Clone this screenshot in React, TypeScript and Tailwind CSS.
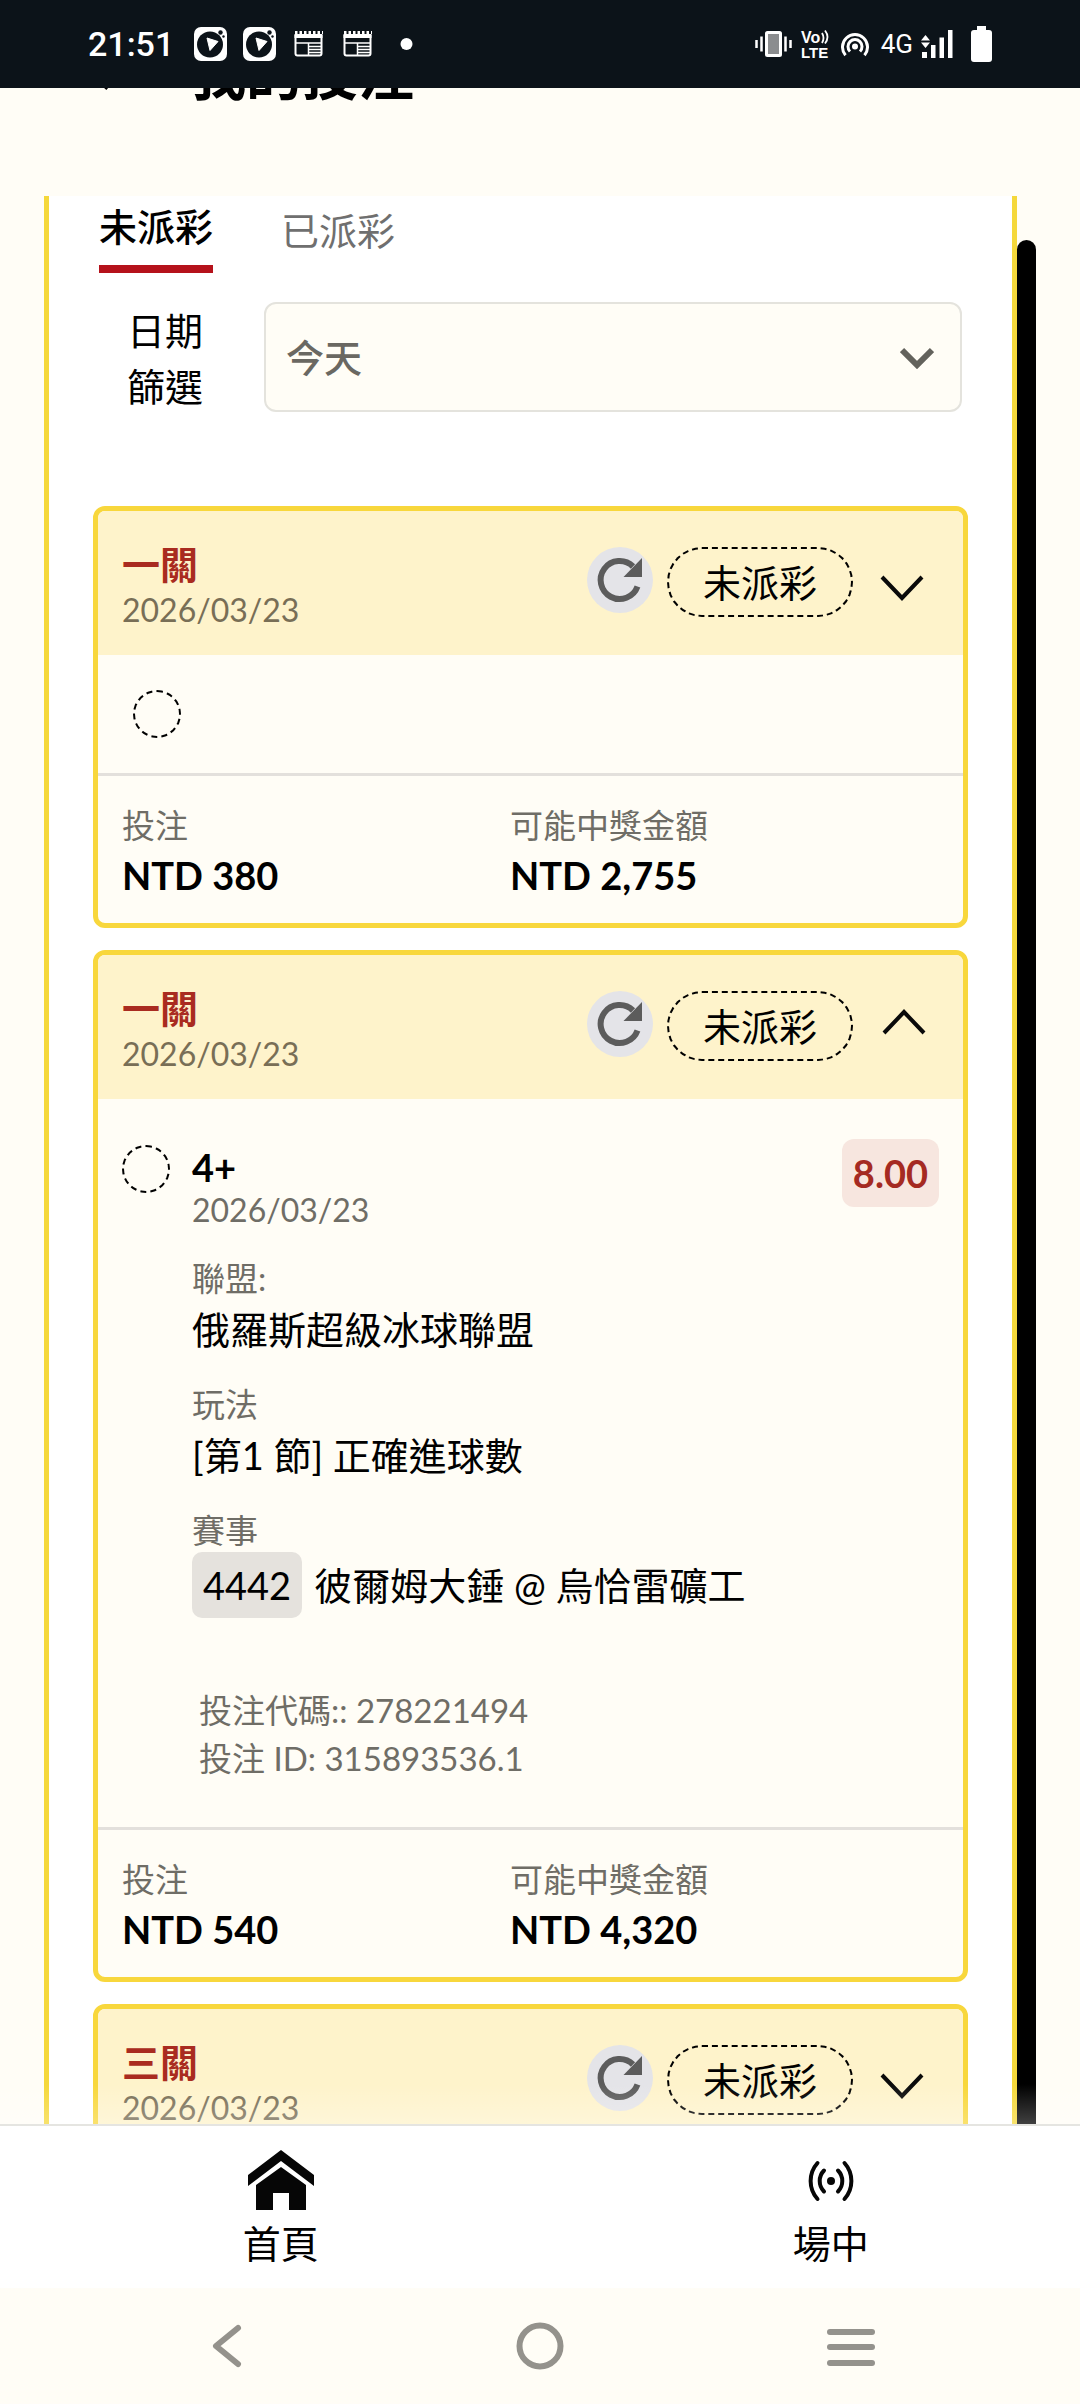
import React, { useState } from 'react';

interface BetDetail {
  selection: string;
  date: string;
  odds: string;
  league: string;
  market: string;
  eventNo: string;
  event: string;
  betCode: string;
  betId: string;
}

interface Bet {
  id: number;
  title: string;
  date: string;
  stake: string;
  payout: string;
  open: boolean;
  detail?: BetDetail;
}

const bets: Bet[] = [
  { id: 1, title: '一關', date: '2026/03/23', stake: 'NTD 380', payout: 'NTD 2,755', open: false },
  {
    id: 2,
    title: '一關',
    date: '2026/03/23',
    stake: 'NTD 540',
    payout: 'NTD 4,320',
    open: true,
    detail: {
      selection: '4+',
      date: '2026/03/23',
      odds: '8.00',
      league: '俄羅斯超級冰球聯盟',
      market: '[第1 節] 正確進球數',
      eventNo: '4442',
      event: '彼爾姆大錘 @ 烏恰雷礦工',
      betCode: '278221494',
      betId: '315893536.1',
    },
  },
  { id: 3, title: '三關', date: '2026/03/23', stake: '', payout: '', open: false },
];

const PlayAppIcon = () => (
  <svg width="33" height="34" viewBox="0 0 33 34" aria-hidden="true">
    <rect width="33" height="34" rx="7" fill="#fff" />
    <circle cx="16" cy="17.500" r="13" fill="#0c1319" />
    <path d="M13 11l11 3.500-8 9z" fill="#fff" stroke="#fff" strokeLinejoin="round" />
    <circle cx="26.500" cy="5.500" r="2.200" fill="#0c1319" />
    <circle cx="29.500" cy="9.500" r="1.200" fill="#0c1319" />
  </svg>
);

const NewsIcon = () => (
  <svg width="33" height="26" viewBox="0 0 33 26" fill="none" stroke="#fff" aria-hidden="true">
    <path d="M3.500 4v18.500a2 2 0 002 2h22a2 2 0 002-2V4" strokeWidth="2" />
    <path d="M2.500 5h28" strokeWidth="4" />
    <path d="M3 1.500h28" strokeWidth="3" strokeDasharray="2.500 2" />
    <path d="M3 12h27M16.500 12v12M17 15.500h12M17 18.500h12M17 21.500h12" strokeWidth="1.500" />
  </svg>
);

const StatusBar = () => (
  <div className="flex h-[88px] shrink-0 items-center justify-between bg-[#0c1319] px-[88px] font-['Roboto',sans-serif] text-white">
    <div className="flex items-center gap-4">
      <span className="mr-1 text-[34px] leading-10 font-medium">21:51</span>
      <PlayAppIcon />
      <PlayAppIcon />
      <NewsIcon />
      <NewsIcon />
      <svg width="33" height="12" viewBox="0 0 33 12" aria-hidden="true">
        <circle cx="16.500" cy="6" r="6" fill="#fff" />
      </svg>
    </div>
    <div className="flex items-center">
      {/* バイブ */}
      <svg className="mr-2" width="38" height="26" viewBox="0 0 38 26" fill="none" stroke="#fff" aria-hidden="true">
        <rect x="11.500" y="1.500" width="14" height="23" rx="1" strokeWidth="3" fill="#8b8d8f" />
        <path d="M1.500 9v8M35.500 9v8M6.500 5.500v15M30.500 5.500v15" strokeWidth="2.500" />
      </svg>
      <svg className="mr-3 overflow-visible" width="28" height="30" viewBox="0 0 28 30" aria-hidden="true">
        <text x="0" y="14" fontSize="16" fontWeight="700" fontFamily="Liberation Sans, sans-serif" fill="#fff">Vo</text>
        <text x="0" y="29" fontSize="15" fontWeight="700" fontFamily="Liberation Sans, sans-serif" fill="#fff">LTE</text>
        <path d="M21 4q3 5 0 10M24 1.500q5 6.500 0 13" fill="none" stroke="#fff" strokeWidth="1.800" />
      </svg>
      <svg className="mr-3" width="28" height="26" viewBox="0 0 28 26" fill="none" stroke="#fff" strokeWidth="3" aria-hidden="true">
        <path d="M4.500 24.200a12.500 12.500 0 1119 0" />
        <path d="M9 20.500a7 7 0 1110 0" />
        <circle cx="14" cy="15.500" r="3" fill="#fff" stroke="none" />
      </svg>
      <span className="mr-2 text-[26px] leading-10">4G</span>
      <svg className="mr-[18px]" width="32" height="28" viewBox="0 0 32 28" fill="#fff" aria-hidden="true">
        <path d="M1 22h5v6H1zM10 15h4.500v13H10zM18.500 7.500H23V28h-4.500zM27 0h4.500v28H27z" />
        <path d="M0 10.500L4.500 5 9 10.500zM0 12.500h9L4.500 18z" />
      </svg>
      <svg width="21" height="36" viewBox="0 0 21 36" fill="#fff" aria-hidden="true">
        <rect x="6" width="9" height="6" />
        <rect y="4" width="21" height="32" rx="3" />
      </svg>
    </div>
  </div>
);

const DashedCircle = () => (
  <span className="block size-12 shrink-0 rounded-full border-2 border-dashed border-black" />
);

const BetHeader: React.FC<{ bet: Bet; open: boolean; onToggle: () => void }> = ({ bet, open, onToggle }) => (
  <div className="flex h-36 items-start justify-between bg-[#fef3cb] pt-[29px] pr-[26px] pl-6">
    <div>
      <h2 className="text-[38px] leading-[48px] font-bold text-[#a92b20]">{bet.title}</h2>
      <p className="text-[32px] leading-[44px] text-[#786e56]">{bet.date}</p>
    </div>
    <div className="flex items-start gap-[14px] pt-[7px]">
      <button type="button" aria-label="重新整理" className="size-[66px] rounded-full bg-[#e4e4e8]">
        <svg width="66" height="66" viewBox="0 0 66 66" aria-hidden="true">
          <path d="M50.500 39.500A19 19 0 1146 19.500" fill="none" stroke="#5c5c5c" strokeWidth="6" />
          <path d="M55 11v19H36.500z" fill="#5c5c5c" />
        </svg>
      </button>
      <span className="flex h-[70px] w-[186px] items-center justify-center rounded-full border-2 border-dashed border-black text-[38px] leading-[48px]">
        未派彩
      </span>
      <button type="button" aria-expanded={open} aria-label="展開" className="h-[70px] w-[70px]" onClick={onToggle}>
        <svg width="70" height="70" viewBox="0 0 70 70" fill="none" stroke="#0a0a0a" strokeWidth="4" aria-hidden="true">
          <path d={open ? 'M17 42l20-21 20 21' : 'M15 30l20 21 20-21'} />
        </svg>
      </button>
    </div>
  </div>
);

const Field: React.FC<{ label: string; children: React.ReactNode }> = ({ label, children }) => (
  <div className="mt-7">
    <dt className="text-[33px] leading-[44px] text-[#6f6d66]">{label}</dt>
    <dd className="text-[38px]">{children}</dd>
  </div>
);

const BetDetailView: React.FC<{ detail: BetDetail }> = ({ detail }) => (
  <div className="flex items-start gap-[22px] px-6 pt-10 pb-[45px]">
    <div className="pt-[6px]">
      <DashedCircle />
    </div>
    <div className="min-w-0 flex-1">
      <div className="flex items-start justify-between">
        <div className="pt-1">
          <p className="text-[38px] leading-[48px] font-bold">{detail.selection}</p>
          <p className="text-[32px] leading-[37px] text-[#6f6d66]">{detail.date}</p>
        </div>
        <span className="rounded-xl bg-[#f7e6df] px-[11px] py-[10px] text-[38px] leading-[48px] font-bold text-[#a52a22]">
          {detail.odds}
        </span>
      </div>
      <dl>
        <Field label="聯盟:">
          <p className="pt-1 leading-[50px]">{detail.league}</p>
        </Field>
        <Field label="玩法">
          <p className="pt-1 leading-[50px]">{detail.market}</p>
        </Field>
        <Field label="賽事">
          <p className="flex items-center gap-3 leading-[50px]">
            <span className="rounded-[10px] bg-[#e5e2dd] px-[11px] py-2">{detail.eventNo}</span>
            <span>{detail.event}</span>
          </p>
        </Field>
      </dl>
      <div className="mt-[68px] pl-[7px] text-[33px] leading-[48px] text-[#6f6d66]">
        <p>投注代碼:: {detail.betCode}</p>
        <p>投注 ID: {detail.betId}</p>
      </div>
    </div>
  </div>
);

const BetCard: React.FC<{ bet: Bet }> = ({ bet }) => {
  const [open, setOpen] = useState(bet.open);

  return (
    <article className="shrink-0 overflow-hidden rounded-xl border-[5px] border-[#f8d73c] bg-[#fffdf6]">
      <BetHeader bet={bet} open={open} onToggle={() => setOpen(!open)} />
      {open && bet.detail ? (
        <BetDetailView detail={bet.detail} />
      ) : (
        <div className="px-[35px] py-[35px]">
          <DashedCircle />
        </div>
      )}
      {bet.stake && (
        <dl className="flex border-t-[3px] border-[#e3e0dc] px-6 pt-[27px] pb-6">
          <div className="w-[388px]">
            <dt className="text-[33px] leading-[44px] text-[#6f6d66]">投注</dt>
            <dd className="mt-1 text-[38px] leading-[48px] font-bold">{bet.stake}</dd>
          </div>
          <div>
            <dt className="text-[33px] leading-[44px] text-[#6f6d66]">可能中獎金額</dt>
            <dd className="mt-1 text-[38px] leading-[48px] font-bold">{bet.payout}</dd>
          </div>
        </dl>
      )}
    </article>
  );
};

const BottomNav = () => (
  <nav className="flex h-[164px] shrink-0 border-t-2 border-[#e5e5e1] bg-white text-[38px] leading-[48px]">
    <a href="#home" className="flex w-[52%] flex-col items-center pt-6">
      <svg width="66" height="60" viewBox="0 0 66 60" fill="#060606" aria-hidden="true">
        <path d="M33 0l33 25v11L33 11 0 36V25z" />
        <path d="M33 17l25 18v25H41V43H25v17H8V35z" />
      </svg>
      <span className="mt-[9px]">首頁</span>
    </a>
    <a href="#live" className="flex flex-1 flex-col items-center pt-6 pl-5">
      <svg width="66" height="60" viewBox="0 0 66 60" fill="none" stroke="#060606" strokeWidth="4" strokeLinecap="round" aria-hidden="true">
        <path d="M19.500 13a27 27 0 000 36M46.500 13a27 27 0 010 36M26 20.500a15 15 0 000 21M40 20.500a15 15 0 010 21" />
        <circle cx="33" cy="31" r="4" fill="#060606" stroke="none" />
      </svg>
      <span className="mt-[9px]">場中</span>
    </a>
  </nav>
);

const SystemNav = () => (
  <div className="flex h-[116px] shrink-0 items-center justify-between bg-[#fffdf6] px-[205px]">
    <button type="button" aria-label="返回">
      <svg width="48" height="48" viewBox="0 0 48 48" fill="none" stroke="#94928c" strokeWidth="6" strokeLinecap="round" strokeLinejoin="round" aria-hidden="true">
        <path d="M33 6L11 24l22 18" />
      </svg>
    </button>
    <button type="button" aria-label="主畫面">
      <svg width="48" height="48" viewBox="0 0 48 48" fill="none" stroke="#94928c" strokeWidth="6" aria-hidden="true">
        <circle cx="24" cy="24" r="20.500" />
      </svg>
    </button>
    <button type="button" aria-label="最近使用">
      <svg width="48" height="48" viewBox="0 0 48 48" fill="#94928c" aria-hidden="true">
        <rect y="7" width="48" height="6" rx="3" />
        <rect y="22" width="48" height="6" rx="3" />
        <rect y="38" width="48" height="6" rx="3" />
      </svg>
    </button>
  </div>
);

const App: React.FC = () => {
  const [range, setRange] = useState('today');

  return (
    <div lang="zh-Hant" className="flex h-screen flex-col overflow-hidden bg-[#fffdf6] font-['Lato','Noto_Sans_CJK_TC',sans-serif] text-black">
      <StatusBar />
      {/* ヘッダーはスクロールで上に隠れている */}
      <header className="flex h-[108px] shrink-0 items-end overflow-hidden pb-[86px] pl-[88px]">
        <svg className="mb-[17px] shrink-0" width="44" height="44" viewBox="0 0 44 44" fill="none" stroke="#000" strokeWidth="8" aria-hidden="true">
          <path d="M21 1L1 20l20 18" />
        </svg>
        <h1 className="ml-[58px] text-[56px] leading-[72px] font-bold">我的投注</h1>
      </header>

      <div className="relative min-h-0 flex-1 overflow-hidden">
        <div className="flex h-full px-[44px]">
          <main className="flex min-w-0 flex-1 flex-col border-x-[5px] border-[#f5d83b] bg-white px-[44px] pt-[2px]">
            <div className="flex shrink-0 items-center gap-[68px] px-[6px] text-[38px] leading-[56px]">
              <button type="button" className="border-b-8 border-[#b5121b] pb-[11px] font-medium">
                未派彩
              </button>
              <button type="button" className="pb-[11px] text-[#6f6f6f]">
                已派彩
              </button>
            </div>

            <div className="mt-[29px] flex shrink-0 items-start gap-[33px] px-[6px]">
              <label htmlFor="range" className="w-[132px] px-5 text-center text-[38px] leading-[56px]">
                日期篩選
              </label>
              <div className="relative flex-1">
                <select
                  id="range"
                  value={range}
                  onChange={(e) => setRange(e.target.value)}
                  className="h-[110px] w-full appearance-none rounded-xl border-2 border-[#e4e3dd] bg-[#fffdf6] px-5 text-[38px] font-medium text-[#6a6862]"
                >
                  <option value="today">今天</option>
                </select>
                <svg className="pointer-events-none absolute top-[45px] right-7" width="34" height="22" viewBox="0 0 34 22" fill="none" stroke="#63625c" strokeWidth="6" aria-hidden="true">
                  <path d="M2 3l15 15L32 3" />
                </svg>
              </div>
            </div>

            <div className="mt-[92px] flex flex-col gap-[22px]">
              {bets.map((bet) => (
                <BetCard key={bet.id} bet={bet} />
              ))}
            </div>
          </main>
          {/* スクロールバー */}
          <div className="mt-[44px] w-[19px] shrink-0 rounded-t-full bg-black" />
        </div>
        <div className="pointer-events-none absolute inset-x-0 bottom-0 h-10 bg-linear-to-t from-white/25 to-transparent" />
      </div>

      <BottomNav />
      <SystemNav />
    </div>
  );
};

export default App;
